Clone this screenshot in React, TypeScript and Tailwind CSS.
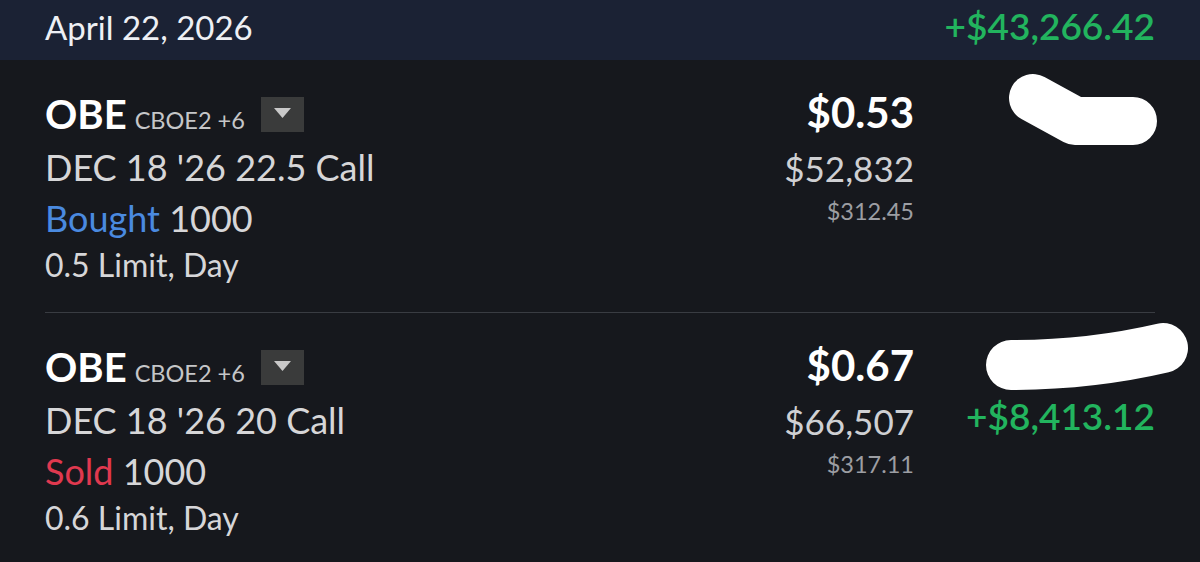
type Order = {
  strike: string;
  side: "Bought" | "Sold";
  limit: string;
  price: string;
  total: string;
  fee: string;
  pnl?: string;
  blob: string;
  blobWidth: number;
};

const orders: Order[] = [
  {
    strike: "DEC 18 '26 22.5 Call",
    side: "Bought",
    limit: "0.5 Limit, Day",
    price: "$0.53",
    total: "$52,832",
    fee: "$312.45",
    blob: "M1033 38 L1075 61 L1133 61",
    blobWidth: 48,
  },
  {
    strike: "DEC 18 '26 20 Call",
    side: "Sold",
    limit: "0.6 Limit, Day",
    price: "$0.67",
    total: "$66,507",
    fee: "$317.11",
    pnl: "+$8,413.12",
    blob: "M1011 52 Q1090 52 1163 35",
    blobWidth: 50,
  },
];

function OrderRow({ order, divider }: { order: Order; divider: boolean }) {
  return (
    <div className="relative px-[45px]">
      <div className={`flex pt-[28px] ${divider ? "pb-[25px] border-b border-[#393c42]" : ""}`}>
        <div className="flex-1">
          <div className="flex items-center h-[52px]">
            <span className="leading-none">
              <span className="text-[40px] font-bold text-white">OBE</span>
              <span className="ml-[8px] text-[23.5px] text-[#c5c6c8]">CBOE2 +6</span>
            </span>
            <div className="ml-[16px] w-[43px] h-[35px] bg-[#3a3b3b] flex items-center justify-center">
              <svg width="17" height="10" viewBox="0 0 17 10" className="-mt-[2px]">
                <path d="M0 0 H17 L8.5 10 Z" fill="#c9c9c9" />
              </svg>
            </div>
          </div>
          <div className="h-[54px] leading-[54px] text-[36px] text-[#d6d6d8]">{order.strike}</div>
          <div className="h-[48px] leading-[48px] text-[36px] text-[#d6d6d8]">
            <span className={order.side === "Bought" ? "text-[#4a8ae0]" : "text-[#e0394f]"}>{order.side}</span> 1000
          </div>
          <div className="h-[45px] leading-[45px] text-[32px] text-[#d6d6d8]">{order.limit}</div>
        </div>
        <div className="text-right">
          <div className="h-[48px] leading-[48px] text-[42px] font-bold text-white">{order.price}</div>
          <div className="h-[65px] leading-[65px] text-[35px] text-[#cfd0d3]">{order.total}</div>
          <div className="h-[20px] leading-[20px] text-[23.5px] text-[#9c9ea3]">{order.fee}</div>
        </div>
        <div className="w-[241px] text-right">
          <div className="h-[48px]" />
          {order.pnl && (
            <div className="h-[53px] leading-[53px] text-[37px] font-semibold text-[#22b45e]">{order.pnl}</div>
          )}
        </div>
      </div>
      <svg className="absolute left-0 top-0 pointer-events-none overflow-visible" width="1200" height="252" viewBox="0 0 1200 252">
        <path d={order.blob} fill="none" stroke="#ffffff" strokeWidth={order.blobWidth} strokeLinecap="round" strokeLinejoin="round" />
      </svg>
    </div>
  );
}

export default function App() {
  return (
    <div className="w-[1200px] h-[562px] overflow-hidden bg-[#16181d] font-['Lato',sans-serif]">
      <div className="h-[60px] bg-[#1b2234] px-[45px] pt-[7px] flex items-baseline justify-between">
        <span className="text-[33px] leading-none text-[#eef0f4]">April 22, 2026</span>
        <span className="text-[37px] leading-none font-semibold text-[#22b45e]">+$43,266.42</span>
      </div>
      {orders.map((o, i) => (
        <OrderRow key={i} order={o} divider={i < orders.length - 1} />
      ))}
    </div>
  );
}
